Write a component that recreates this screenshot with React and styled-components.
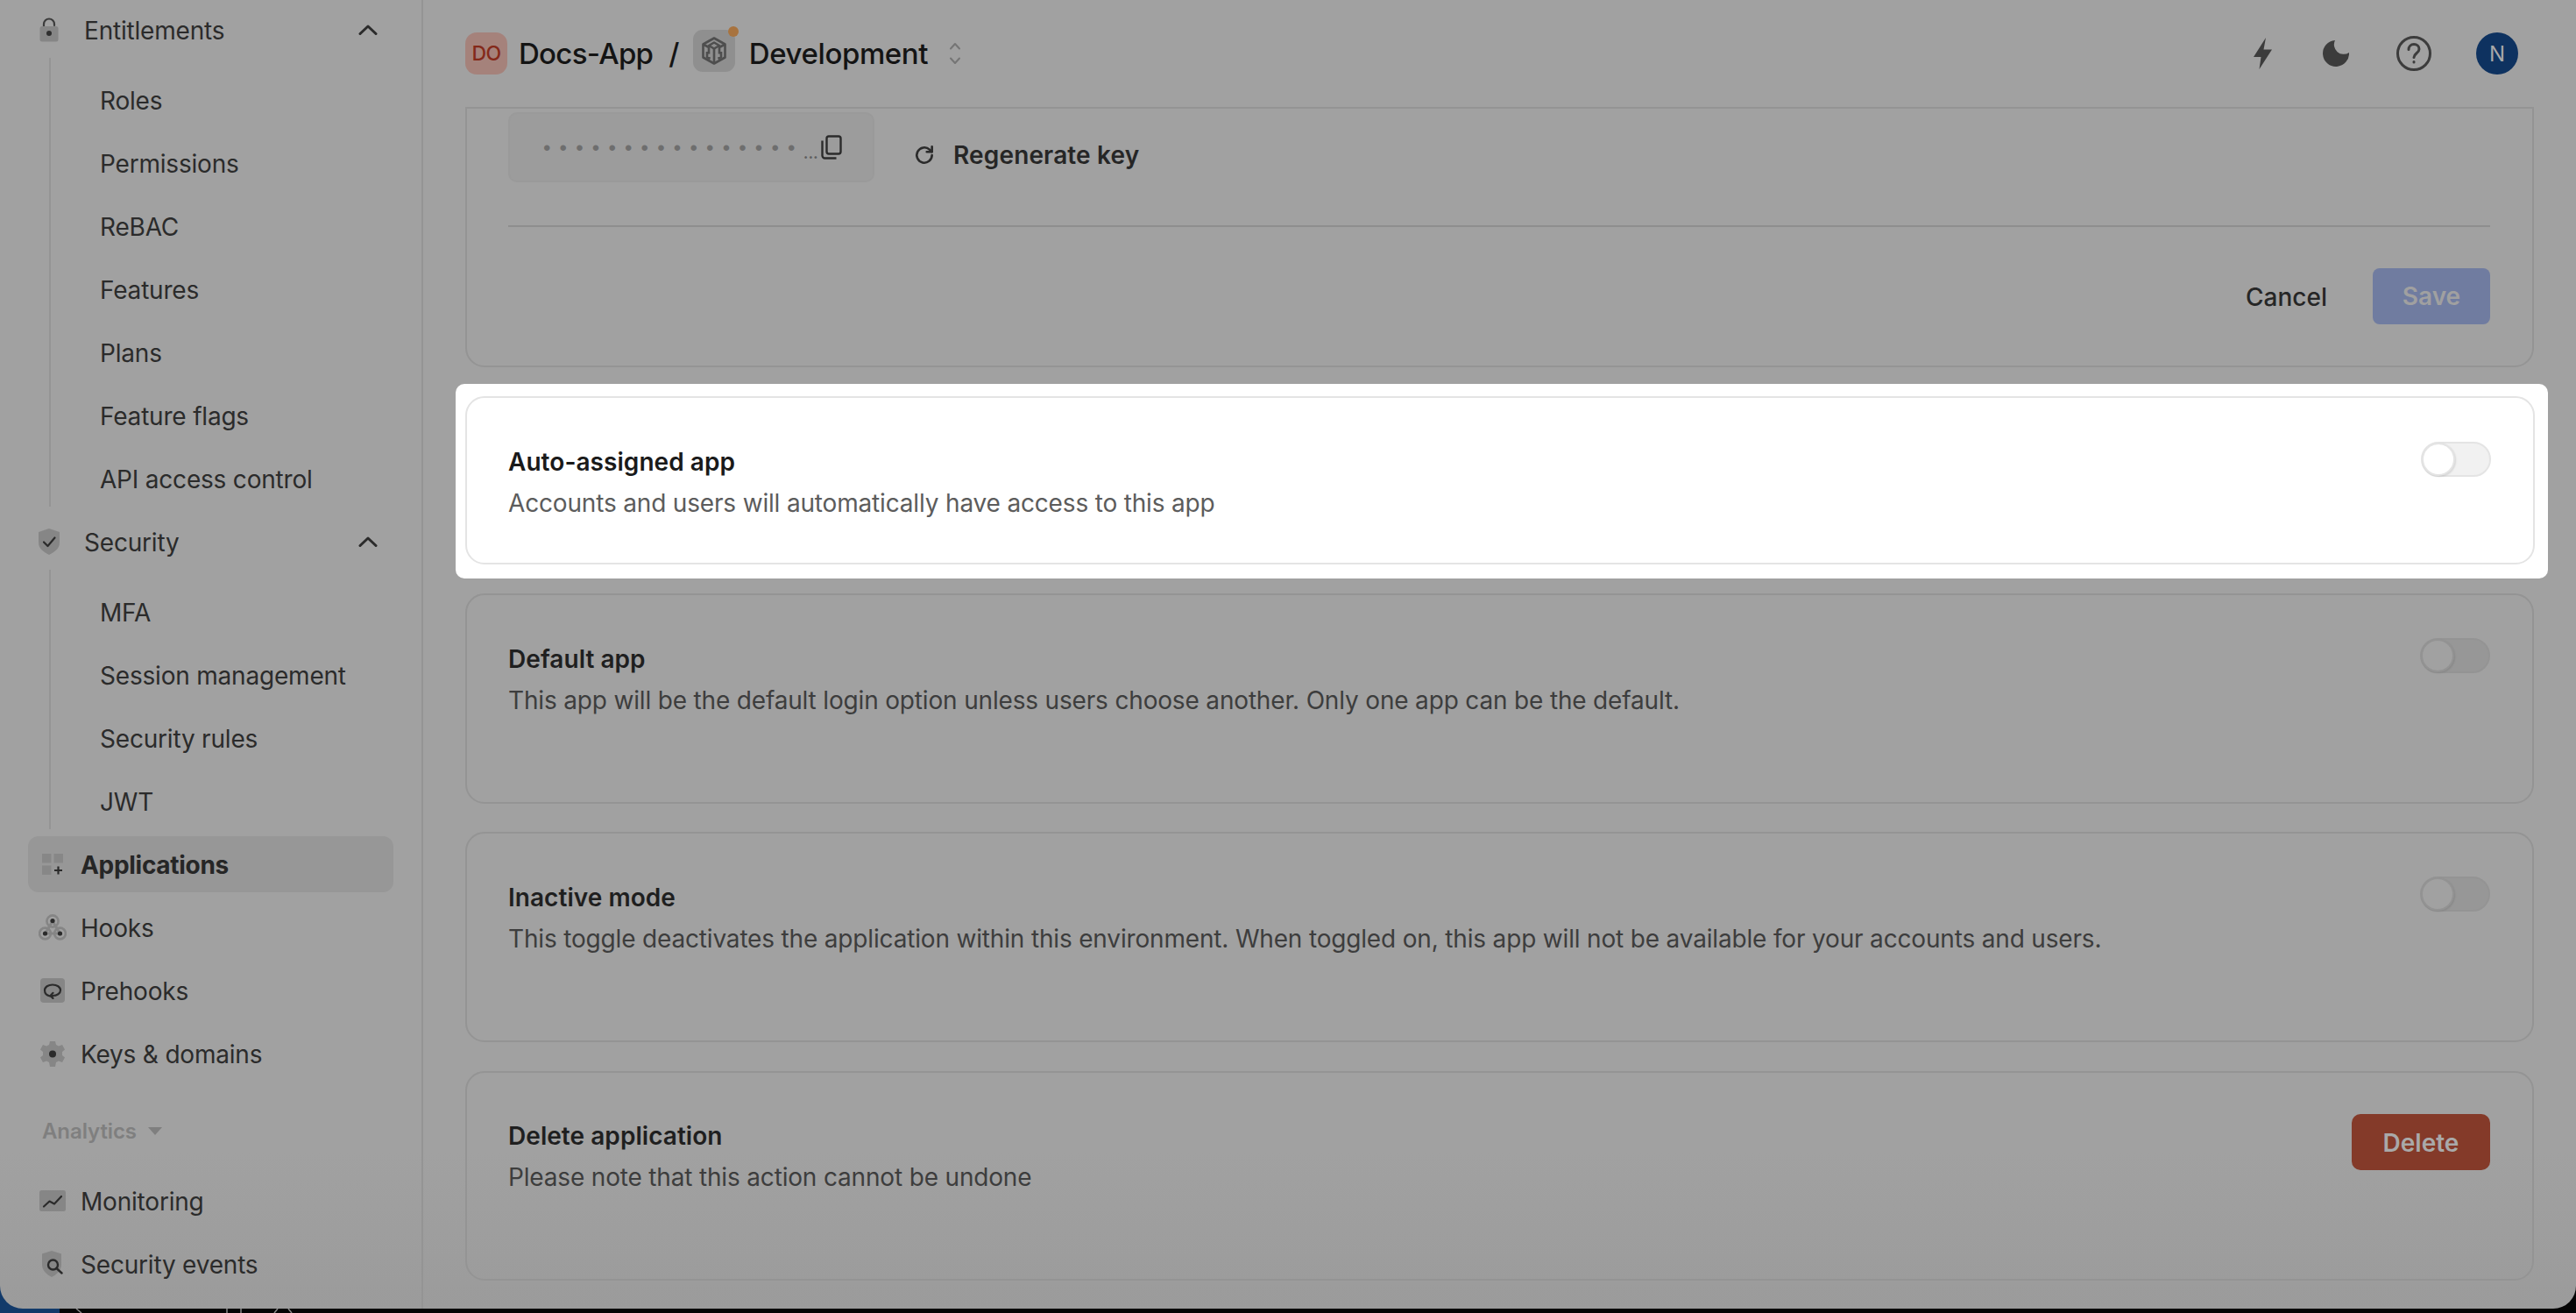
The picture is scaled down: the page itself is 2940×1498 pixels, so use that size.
import React from "react";
import styled, { createGlobalStyle } from "styled-components";

const Global = createGlobalStyle`
  html, body { margin: 0; padding: 0; background: #050505; }
  * { box-sizing: border-box; }
  body { font-family: Inter, "Noto Sans", sans-serif; color: #2a2a2a; overflow: hidden; }
`;

const Page = styled.div`
  width: 2940px; height: 1498px; display: flex; flex-direction: column; overflow: hidden;
  background: linear-gradient(90deg, #123a6a 68px, #050505 68px);
`;
const Win = styled.div`
  height: 1493px; flex: none; display: flex; overflow: hidden;
  border-radius: 0 0 26px 26px;
  background: linear-gradient(180deg, #a1a1a1 88%, #9b9b9b 100%);
`;
const DesktopStrip = styled.div`height: 5px; flex: none; overflow: hidden; padding-left: 85px; display: flex;`;

const Sidebar = styled.aside`
  width: 483px; flex: none; border-right: 2px solid #949494; padding: 0 32px; overflow: hidden;
`;
const NavList = styled.nav`margin-top: -2px; display: flex; flex-direction: column;`;
const Row = styled.div`
  height: 72px; flex: none; display: flex; align-items: center; font-size: 28px; letter-spacing: -0.2px;
  color: #2b2b2b; position: relative; padding-top: 2px;
`;
const SelectedPill = styled(Row)`
  height: 64px; margin: 4px 0; border-radius: 12px; background: #979797; font-weight: 700; color: #262626; letter-spacing: -0.3px;
`;
const IconSlot = styled.span`
  width: ${p => (p.$group ? 48 : 56)}px; margin: -2px ${p => (p.$group ? 16 : 4)}px 0 0; flex: none; display: flex; justify-content: center; align-items: center;
`;
const Chevron = styled.svg`position: absolute; right: 18px; top: 50%; margin-top: -7px;`;
const SubList = styled.div`
  position: relative; margin: -4px 0 0 24px; padding: 12px 0 0 58px; display: flex; flex-direction: column;
  &::before { content: ""; position: absolute; left: 0; top: 0; bottom: 4px; width: 2px; background: #949494; }
`;
const SectionLabel = styled.div`
  height: 96px; flex: none; display: flex; align-items: center; gap: 13px; padding: 8px 0 0 16px;
  font-size: 24px; font-weight: 600; color: #7f7f7f; letter-spacing: -0.1px;
`;

const Main = styled.main`flex: 1; min-width: 0; padding: 0 48px; display: flex; flex-direction: column; overflow: hidden;`;
const TopBar = styled.header`height: 122px; flex: none; display: flex; align-items: center; justify-content: space-between; padding-right: 18px;`;
const Crumbs = styled.div`display: flex; align-items: center; font-size: 33px; font-weight: 500; color: #141414; letter-spacing: -0.7px;`;
const AppBadge = styled.div`
  width: 48px; height: 48px; border-radius: 13px; background: #a5827b; color: #84291a; display: flex; align-items: center; justify-content: center;
  font-size: 23px; font-weight: 500; letter-spacing: -0.5px; margin-right: 13px;
`;
const Slash = styled.span`margin: 0 16px 0 18px;`;
const EnvBadge = styled.div`
  width: 48px; height: 48px; border-radius: 11px; background: #8f8f8f; display: flex; align-items: center; justify-content: center;
  position: relative; margin: -6px 16px 0 0; flex: none;
`;
const EnvDot = styled.span`position: absolute; top: -4px; right: -4px; width: 12px; height: 12px; border-radius: 50%; background: #a8733f;`;
const EnvName = styled.span`letter-spacing: -0.4px;`;
const Updown = styled.svg`margin-left: 24px;`;
const Tools = styled.div`display: flex; align-items: center;`;
const ToolIcon = styled.svg`display: block; flex: none; margin-left: ${p => p.$gap}px;`;
const Avatar = styled.div`
  width: 48px; height: 48px; border-radius: 50%; background: #0e3260; color: #a8a8a8; display: flex; align-items: center; justify-content: center;
  font-size: 24px; margin-left: 51px;
`;

const Card = styled.section`
  border: 2px solid #949494; border-radius: 0 0 22px 22px; height: 297px; flex: none; padding: 4px 48px 0 47px;
  display: flex; flex-direction: column;
`;
const KeyRow = styled.div`display: flex; align-items: center; height: 80px;`;
const KeyBox = styled.div`
  width: 418px; height: 80px; border: 2px solid #9a9a9a; background: #9c9c9c; border-radius: 10px; display: flex; align-items: center; padding-left: 38px; position: relative;
`;
const Mask = styled.span`
  font-family: "Liberation Sans", sans-serif; font-size: 24px; letter-spacing: 10.2px; color: #6e6e6e; line-height: 1; margin-top: 2px; white-space: nowrap;
`;
const Dots = styled.span`font-size: 18px; font-weight: 600; line-height: 1; color: #5e5e5e; margin: 14px 0 0 -1px; letter-spacing: 0;`;
const CopyIcon = styled.svg`margin: 0 0 0 3px; flex: none;`;
const RegenButton = styled.div`
  margin: 18px 0 0 44px; display: flex; align-items: center; gap: 20px; font-size: 28px; font-weight: 600; color: #262626; letter-spacing: 0.15px;
`;
const Divider = styled.hr`width: 100%; height: 2px; border: 0; background: #8e8e8e; margin: 49px 0 0;`;
const Actions = styled.div`display: flex; justify-content: flex-end; align-items: center; margin-top: 47px; gap: 52px;`;
const Cancel = styled.div`font-size: 28px; font-weight: 500; color: #262626; margin-top: 2px; letter-spacing: 0;`;
const Save = styled.div`
  width: 134px; height: 64px; border-radius: 8px; background: #707ca0; color: #a0a0a0; font-size: 28px; font-weight: 600; display: flex; align-items: center; justify-content: center;
`;
const Spotlight = styled.div`
  flex: none; background: #fff; border-radius: 10px; margin: 19px -16px 17px -11px; padding: 14px 15px 16px 11px;
`;
const SettingCard = styled.section`
  height: ${p => (p.$lit ? 192 : 240)}px; flex: none; border: 2px solid ${p => (p.$lit ? "#e4e4e4" : "#949494")}; border-radius: 22px;
  padding: 50px 48px 0 47px; display: flex; justify-content: space-between; align-items: flex-start;
`;
const SettingList = styled.div`
  display: flex; flex-direction: column; gap: 32px;
  & > :last-child { margin-top: 1px; height: 239px; padding-top: 49px; }
`;
const SettingTitle = styled.div`
  font-size: 28px; line-height: 46px; font-weight: 600; letter-spacing: 0.05px; color: ${p => (p.$lit ? "#1a1a1a" : "#1f1f1f")};
`;
const SettingText = styled.div`
  font-size: 28px; line-height: 47px; padding-top: 1px; letter-spacing: -0.17px; color: ${p => (p.$lit ? "#5c5c5c" : "#3d3d3d")};
`;
const Toggle = styled.div`
  width: 80px; height: 40px; margin-top: ${p => (p.$lit ? 0 : -1)}px; border-radius: 20px; position: relative; flex: none;
  border: 2px solid ${p => (p.$lit ? "#e4e4e4" : "#949494")}; background: ${p => (p.$lit ? "#f1f1f1" : "#979797")};
`;
const Thumb = styled.span`
  position: absolute; left: -1px; top: -1px; width: 38px; height: 38px; border-radius: 50%;
  background: ${p => (p.$lit ? "#fff" : "#a1a1a1")}; border: 2px solid ${p => (p.$lit ? "#e4e4e4" : "#939393")};
  box-shadow: 1px 1px 2px ${p => (p.$lit ? "rgba(0,0,0,.12)" : "rgba(0,0,0,.1)")};
`;
const DeleteButton = styled.div`
  width: 158px; height: 64px; margin-top: -2px; padding-top: 2px; border-radius: 10px; background: #843a29; color: #a9a9a9; font-size: 28px; font-weight: 600; display: flex; align-items: center; justify-content: center; flex: none;
`;

const Up = () => (
  <Chevron width="22" height="14" viewBox="0 0 22 14" fill="none" stroke="#2b2b2b" strokeWidth="3" strokeLinecap="round" strokeLinejoin="round">
    <path d="M2 11.5 11 3l9 8.5" />
  </Chevron>
);
const LockIcon = () => (
  <svg width="22" height="28" viewBox="0 0 22 28">
    <path d="M5 12V7.5a6 6 0 0 1 12 0V9" fill="none" stroke="#3c3c3c" strokeWidth="2.2" strokeLinecap="round" />
    <rect x="0.5" y="10" width="21" height="17.5" rx="2.5" fill="#868686" />
    <circle cx="11" cy="18" r="3" fill="#2f2f2f" />
  </svg>
);
const ShieldCheck = () => (
  <svg width="24" height="30" viewBox="0 0 24 30">
    <path d="M12 0 24 4v12c0 7-6 11-12 14C6 27 0 23 0 16V4z" fill="#868686" />
    <path d="M6 15.5 10.5 20 18.5 10.5" fill="none" stroke="#2b2b2b" strokeWidth="2.2" strokeLinecap="round" strokeLinejoin="round" />
  </svg>
);
const AppsIcon = () => (
  <svg width="24" height="24" viewBox="0 0 24 24">
    <rect width="10.5" height="10.5" fill="#878787" />
    <rect x="13.5" width="10.5" height="10.5" fill="#878787" />
    <rect y="13.5" width="10.5" height="10.5" fill="#878787" />
    <path d="M18.5 14.5v9M14 19h9" stroke="#2b2b2b" strokeWidth="2.2" />
  </svg>
);
const HooksIcon = () => (
  <svg width="32" height="30" viewBox="0 0 32 30" fill="none">
    <circle cx="16" cy="8" r="6.6" stroke="#858585" strokeWidth="2.6" />
    <circle cx="7.5" cy="22" r="6.4" stroke="#858585" strokeWidth="2.6" />
    <circle cx="24.5" cy="22" r="6.4" stroke="#858585" strokeWidth="2.6" />
    <path d="M7.5 22h17M16 8 7.5 22M16 8l8.500 14" stroke="#858585" strokeWidth="3" />
    <circle cx="16" cy="7.5" r="2.6" fill="#2b2b2b" />
    <circle cx="7.5" cy="22" r="2.6" fill="#2b2b2b" />
    <circle cx="24.5" cy="22" r="2.6" fill="#2b2b2b" />
  </svg>
);
const PrehooksIcon = () => (
  <svg width="28" height="28" viewBox="0 0 28 28" fill="none">
    <rect width="28" height="28" rx="4" fill="#868686" />
    <path d="M11 20.5C7.5 19.7 5 17.3 5 13.8 5 10 9 7.5 14 7.5s9 2.500 9 6.300c0 3.700-4 6.200-9 6.200h-1" stroke="#2b2b2b" strokeWidth="2.2" strokeLinecap="round" />
    <path d="M14.500 16.800 11.500 19.900l3 3" stroke="#2b2b2b" strokeWidth="2.2" strokeLinecap="round" strokeLinejoin="round" />
  </svg>
);
const GearIcon = () => (
  <svg width="28" height="29" viewBox="0 0 28 29">
    <path fill="#868686" d="M11 0h6l1 4 3 1.500 4-1.500 3 5.500-3 2.500v4l3 2.500-3 5.500-4-1.500L18 24l-1 5h-6l-1-5-3-1.500-4 1.500-3-5.500 3-2.500v-4L0 9.500 3 4l4 1.500L10 4z" />
    <circle cx="14" cy="14.500" r="4" fill="#2b2b2b" />
  </svg>
);
const MonitorIcon = () => (
  <svg width="30" height="24" viewBox="0 0 30 24" fill="none">
    <rect width="30" height="24" rx="2.500" fill="#868686" />
    <path d="M5 18.500 11.500 12.500 17 15.500 25 7" stroke="#2b2b2b" strokeWidth="2.200" strokeLinecap="round" strokeLinejoin="round" />
  </svg>
);
const ShieldSearch = () => (
  <svg width="24" height="30" viewBox="0 0 24 30" fill="none">
    <path d="M11 0 22 3.500V16c0 6-5 11-11 14C5 27 0 22 0 16V3.500z" fill="#868686" />
    <circle cx="12.500" cy="16" r="5.500" stroke="#2b2b2b" strokeWidth="2.400" />
    <path d="m16.500 20 6 5.500" stroke="#2b2b2b" strokeWidth="2.400" strokeLinecap="round" />
  </svg>
);
const CubeIcon = () => (
  <svg width="28" height="32" viewBox="0 0 28 32" fill="none" stroke="#4e4e4e" strokeWidth="2.600" strokeLinejoin="round">
    <path d="M14 1.500 26.500 8.500v15L14 30.500 1.500 23.500v-15z" />
    <path d="M14 6.500 20 10l-6 3.500L8 10z" />
    <path d="M14 13.500V30M1.500 8.500 8 12v7.500M26.500 8.500 20 12v7.500" />
    <path d="M6 17v6l3.500 2M22 17v6l-3.500 2" />
  </svg>
);

const NavItem = ({ icon, children }) => (
  <Row><IconSlot>{icon}</IconSlot>{children}</Row>
);
const Group = ({ icon, label }) => (
  <Row><IconSlot $group>{icon}</IconSlot>{label}<Up /></Row>
);
const Sub = ({ items }) => (
  <SubList>{items.map(i => <Row key={i}>{i}</Row>)}</SubList>
);

const Setting = ({ title, text, lit }) => (
  <SettingCard $lit={lit}>
    <div>
      <SettingTitle $lit={lit}>{title}</SettingTitle>
      <SettingText $lit={lit}>{text}</SettingText>
    </div>
    <Toggle $lit={lit}><Thumb $lit={lit} /></Toggle>
  </SettingCard>
);

export default function App() {
  return (
    <Page>
      <Global />
      <Win>
        <Sidebar>
          <NavList>
            <Group icon={<LockIcon />} label="Entitlements" />
            <Sub items={["Roles", "Permissions", "ReBAC", "Features", "Plans", "Feature flags", "API access control"]} />
            <Group icon={<ShieldCheck />} label="Security" />
            <Sub items={["MFA", "Session management", "Security rules", "JWT"]} />
            <SelectedPill><IconSlot><AppsIcon /></IconSlot>Applications</SelectedPill>
            <NavItem icon={<HooksIcon />}>Hooks</NavItem>
            <NavItem icon={<PrehooksIcon />}>Prehooks</NavItem>
            <NavItem icon={<GearIcon />}>Keys &amp; domains</NavItem>
            <SectionLabel>Analytics
              <svg width="16" height="9" viewBox="0 0 16 9"><path d="M0 0h16L8 9z" fill="#7f7f7f" /></svg>
            </SectionLabel>
            <NavItem icon={<MonitorIcon />}>Monitoring</NavItem>
            <NavItem icon={<ShieldSearch />}>Security events</NavItem>
          </NavList>
        </Sidebar>
        <Main>
          <TopBar>
            <Crumbs>
              <AppBadge>DO</AppBadge>
              Docs-App
              <Slash>/</Slash>
              <EnvBadge><CubeIcon /><EnvDot /></EnvBadge>
              <EnvName>Development</EnvName>
              <Updown width="14" height="26" viewBox="0 0 14 26" fill="none" stroke="#757575" strokeWidth="2" strokeLinecap="round" strokeLinejoin="round">
                <path d="M2 7.500 7 2l5 5.500M2 18.500 7 24l5-5.500" />
              </Updown>
            </Crumbs>
            <Tools>
              <svg width="21" height="36" viewBox="0 0 21 36"><path d="M14 0 0 22h8.500L6.500 36 21 13.500h-9.500z" fill="#3c3c3c" /></svg>
              <ToolIcon $gap={58} width="30" height="30" viewBox="0 0 30 30"><path d="M14 0A15 15 0 1 0 30 14 11 11 0 0 1 14 0z" fill="#3c3c3c" /></ToolIcon>
              <ToolIcon $gap={54} width="40" height="40" viewBox="0 0 40 40" fill="none" stroke="#3c3c3c" strokeWidth="3" strokeLinecap="round">
                <circle cx="20" cy="20" r="18.500" />
                <path d="M14 15.500c0-3.500 2.500-6 6-6s6 2.500 6 5.500c0 4.500-6 5-6 9.500" />
                <path d="M20 29.500v.5" />
              </ToolIcon>
              <Avatar>N</Avatar>
            </Tools>
          </TopBar>
          <Card>
            <KeyRow>
              <KeyBox>
                <Mask>{"••••••••••••••••"}</Mask>
                <Dots>...</Dots>
                <CopyIcon width="24" height="28" viewBox="0 0 24 28" fill="none" stroke="#2b2b2b" strokeWidth="2.400" strokeLinejoin="round">
                  <rect x="6.500" y="1.500" width="16" height="20" rx="2.500" />
                  <path d="M1.500 6.500v17a3 3 0 0 0 3 3h13" />
                </CopyIcon>
              </KeyBox>
              <RegenButton>
                <svg width="26" height="26" viewBox="0 0 24 24" fill="none" stroke="#2b2b2b" strokeWidth="2.400" strokeLinecap="round" strokeLinejoin="round">
                  <path d="M20 12a8 8 0 1 1-2.600-5.900L20 8.500" />
                  <path d="M20 3v5.500h-5.500" />
                </svg>
                Regenerate key
              </RegenButton>
            </KeyRow>
            <Divider />
            <Actions><Cancel>Cancel</Cancel><Save>Save</Save></Actions>
          </Card>
          <Spotlight>
            <Setting lit title="Auto-assigned app" text="Accounts and users will automatically have access to this app" />
          </Spotlight>
          <SettingList>
            <Setting title="Default app" text="This app will be the default login option unless users choose another. Only one app can be the default." />
            <Setting title="Inactive mode" text="This toggle deactivates the application within this environment. When toggled on, this app will not be available for your accounts and users." />
            <SettingCard>
              <div>
                <SettingTitle>Delete application</SettingTitle>
                <SettingText>Please note that this action cannot be undone</SettingText>
              </div>
              <DeleteButton>Delete</DeleteButton>
            </SettingCard>
          </SettingList>
        </Main>
      </Win>
      <DesktopStrip>
        <svg width="260" height="5" viewBox="0 0 260 5" stroke="#888" strokeWidth="1.500"><path d="M2 0l6 5M174 0v5M190 0v5M232 0l-4 5M244 0l4 5" /></svg>
      </DesktopStrip>
    </Page>
  );
}
